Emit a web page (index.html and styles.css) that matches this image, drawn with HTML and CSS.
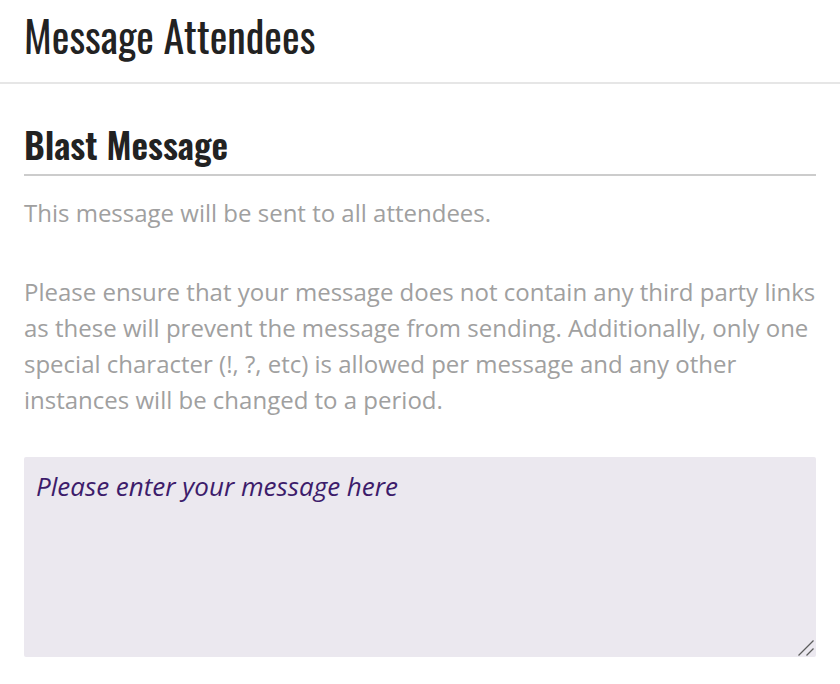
FILE: index.html
```html
<!DOCTYPE html>
<html lang="en">
<head>
<meta charset="utf-8">
<title>Message Attendees</title>
<link rel="stylesheet" href="styles.css">
</head>
<body>
<header class="page-header">
  <h1 class="page-title">Message Attendees</h1>
</header>
<main class="content">
  <h2 class="section-title">Blast Message</h2>
  <p class="note">This message will be sent to all attendees.</p>
  <p class="note note-gap">Please ensure that your message does not contain any third party links as these will prevent the message from sending. Additionally, only one special character (!, ?, etc) is allowed per message and any other instances will be changed to a period.</p>
  <div class="message-wrap">
    <textarea class="message-box" placeholder="Please enter your message here"></textarea>
    <svg class="grip" width="16" height="16" viewBox="0 0 16 16" aria-hidden="true">
      <line x1="0.5" y1="15.5" x2="15.5" y2="0.5" stroke="#5c5c5c" stroke-width="1.3"/>
      <line x1="8.5" y1="15.5" x2="15.5" y2="8.5" stroke="#5c5c5c" stroke-width="1.3"/>
    </svg>
  </div>
</main>
</body>
</html>
```

FILE: styles.css
```css
html, body {
  margin: 0;
  padding: 0;
  background: #ffffff;
}

body {
  font-family: "Open Sans", "Noto Sans", sans-serif;
}

.page-header {
  padding: 14px 24px 26px;
  border-bottom: 2px solid #e6e6e6;
}

.page-title {
  margin: 0;
  font-family: "Oswald", "Liberation Sans Narrow", "DejaVu Sans Condensed", sans-serif;
  font-weight: 400;
  font-size: 42px;
  line-height: 42px;
  color: #222222;
}

.content {
  padding: 0 24px;
}

.section-title {
  margin: 42px 0 0;
  padding-bottom: 12px;
  border-bottom: 2px solid #cccccc;
  font-family: "Oswald", "Liberation Sans Narrow", "DejaVu Sans Condensed", sans-serif;
  font-weight: 600;
  font-size: 36px;
  line-height: 36px;
  color: #222222;
}

.note {
  margin: 19px 0 0;
  font-size: 24px;
  line-height: 36px;
  color: #a0a0a0;
}

.note-gap {
  margin-top: 43px;
}

.message-wrap {
  position: relative;
  margin-top: 39px;
}

.message-box {
  display: block;
  box-sizing: border-box;
  width: 100%;
  height: 200px;
  padding: 11px 12px;
  border: none;
  border-radius: 2px;
  background: #ebe8ef;
  font-family: "Open Sans", "Noto Sans", sans-serif;
  font-style: italic;
  font-size: 26px;
  color: #3d1c6b;
  outline: none;
  resize: none;
}

.message-box::placeholder {
  color: #3d1c6b;
  opacity: 1;
}

.grip {
  position: absolute;
  right: 2px;
  bottom: 1px;
  display: block;
}
```
